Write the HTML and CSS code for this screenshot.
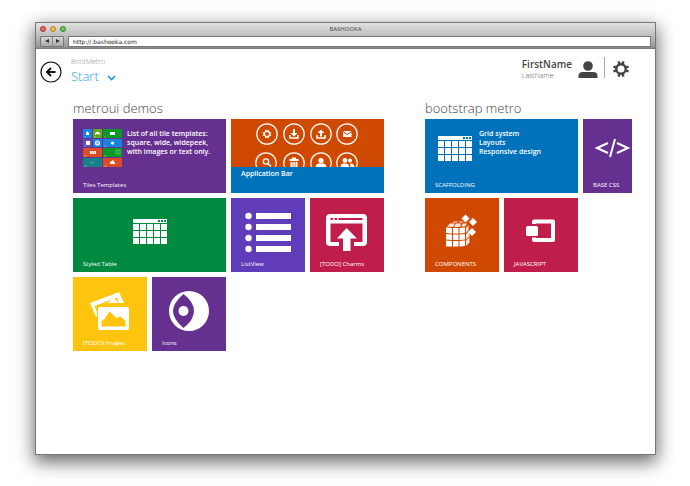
FILE: index.html
```html
<!DOCTYPE html>
<html lang="en">
<head>
<meta charset="utf-8">
<title>BASHOOKA</title>
<link rel="stylesheet" href="styles.css">
</head>
<body>
<svg class="defs" aria-hidden="true">
  <symbol id="table" viewBox="0 0 34 25">
    <path fill="currentColor" fill-rule="evenodd" d="M0 0h34v4H0zM25 1v2h2V1zM28 1v2h2V1zM31 1v2h2V1z"/>
    <path fill="currentColor" d="M0 5h6v6H0zM7 5h6v6H7zM14 5h6v6h-6zM21 5h6v6h-6zM28 5h6v6h-6zM0 12h6v6H0zM7 12h6v6H7zM14 12h6v6h-6zM21 12h6v6h-6zM28 12h6v6h-6zM0 19h6v6H0zM7 19h6v6H7zM14 19h6v6h-6zM21 19h6v6h-6zM28 19h6v6h-6z"/>
  </symbol>
  <symbol id="gear" viewBox="0 0 16 16">
    <circle cx="8" cy="8" r="4.700" fill="none" stroke="currentColor" stroke-width="2.400"/>
    <path stroke="currentColor" stroke-width="2.500" d="M9.600 3.200l.8-2.800M12.800 6.400l2.800-.8M12.800 9.600l2.800.8M9.600 12.800l.8 2.800M6.400 12.800l-.8 2.800M3.200 9.600l-2.800.8M3.200 6.400L.4 5.600M6.400 3.200L5.600.4"/>
  </symbol>
  <symbol id="user" viewBox="0 0 20 17">
    <circle cx="10" cy="5" r="4.800" fill="currentColor"/>
    <path fill="currentColor" d="M.5 17v-2c0-2.500 1.500-4 4-4h11c2.500 0 4 1.500 4 4v2z"/>
  </symbol>
</svg>
<div class="window">
  <header class="chrome">
    <div class="titlebar">
      <div class="lights"><i class="light red"></i><i class="light amber"></i><i class="light green"></i></div>
      <div class="title">BASHOOKA</div>
    </div>
    <div class="toolbar">
      <div class="nav">
        <button type="button" aria-label="Back"><svg viewBox="0 0 6 6"><path d="M1 3l4-2v4z"/></svg></button>
        <button type="button" aria-label="Forward"><svg viewBox="0 0 6 6"><path d="M5 3L1 1v4z"/></svg></button>
      </div>
      <input class="address" type="text" aria-label="Address" value="http://.bashooka.com">
    </div>
  </header>
  <main>
    <div class="top">
      <a class="back" href="#" aria-label="Go back"><svg viewBox="0 0 22 22"><circle cx="11" cy="11" r="10" fill="none" stroke="#111" stroke-width="1.200"/><path d="M15.500 11H7.500M11 7l-4 4 4 4" fill="none" stroke="#111" stroke-width="2"/></svg></a>
      <div class="brand">
        <div class="small">BootMetro</div>
        <a class="start" href="#">Start <svg viewBox="0 0 9 6"><path d="M1 1l3.500 3.500L8 1" fill="none" stroke="#1c9ad6" stroke-width="1.600"/></svg></a>
      </div>
      <div class="account">
        <div class="name"><div class="first">FirstName</div><div class="small last">LastName</div></div>
        <svg class="avatar"><use href="#user"/></svg>
        <a class="settings" href="#" aria-label="Settings"><svg><use href="#gear"/></svg></a>
      </div>
    </div>
    <div class="groups">
      <section>
        <h2>metroui demos</h2>
        <div class="tiles demos">
          <a class="tile wide purple" href="#">
            <div class="info">
              <svg class="thumb" viewBox="0 0 39 38">
                <path fill="#1684e0" d="M0 0h9v9H0zM10 10h9v8h-9zM20 10h19v8H20z"/><path fill="#64a818" d="M10 0h9v9h-9z"/><path fill="#089a22" d="M20 0h19v9H20zM20 19h19v9H20z"/><path fill="#6650b8" d="M0 10h9v8H0z"/><path fill="#db4c27" d="M0 19h19v9H0zM20 29h19v9H20z"/><path fill="#16808a" d="M0 29h19v9H0z"/>
                <path fill="#fff" d="M3 6V4l1.500-2L6 4v2zM12 5c1-3 4-3 5 0v1l-2-1h-1l-2 1zM27 3h5v3h-5zM3 12h4v4H3zM7 22h6v3H7zM27 34l1-2h1l1-1 2 3v1h-5z"/>
                <circle cx="14.500" cy="14" r="2" fill="none" stroke="#fff" stroke-width="1.200"/><path stroke="#fff" stroke-width=".8" d="M12.500 14h4"/><circle cx="29.500" cy="14" r="1.600" fill="#fff"/><path d="M33 21h4v4h-4zM34 23h2M7 34l4-1" fill="none" stroke="#8cc796" stroke-width=".6"/>
                <path stroke="#fff" stroke-width=".5" opacity=".7" d="M1 8h2M11 8h2M21 8h2M1 17h2M21 17h2M1 27h3M21 27h3M1 37h3M21 37h3"/><path d="M9 22v3M11 22v3" stroke="#db4c27" stroke-width=".6"/>
              </svg>
              <p>List of all tile templates:<br>square, wide, widepeek,<br>with images or text only.</p>
            </div>
            <span class="label">Tiles Templates</span>
          </a>
          <a class="tile wide orange peek" href="#">
            <svg class="appbar" viewBox="0 0 106 44">
              <g fill="none" stroke="#fff" stroke-width="1.200"><circle cx="12" cy="11" r="10.200"/><circle cx="39" cy="11" r="10.200"/><circle cx="66" cy="11" r="10.200"/><circle cx="92" cy="11" r="10.200"/><circle cx="11" cy="40" r="10.200"/><circle cx="39" cy="40" r="10.200"/><circle cx="66" cy="40" r="10.200"/><circle cx="92" cy="40" r="10.200"/></g>
              <g fill="#fff"><path d="M38 6h2v4h2.500L39 13.500 35.500 10H38zM65 13.500h2V10h2.500L66 6.500 62.500 10H65z"/><circle cx="66" cy="37.500" r="2.600"/><path d="M60.500 45c0-4 2-4.500 5.500-4.500s5.500.5 5.500 4.500z"/><circle cx="90" cy="37.500" r="2.400"/><circle cx="95" cy="37.500" r="2"/><path d="M85.500 45c0-4 1.500-4.500 4.500-4.500s4.500 1.500 4.500 4.500zM95.500 45c0-3 0-4-1-4.500 3-.5 5 .5 5 4.500zM88 8h8.500l-4.200 3zM88 9.300l4.300 2.800 4.200-2.800V14H88zM34.500 36h9v2h-9zM37 34.500h4V36h-4zM35.500 39h7v6h-7z"/></g>
              <path fill="none" stroke="#fff" stroke-width="1.500" d="M35 12v3h8v-3M62 12v3h8v-3"/><path d="M38 39v6M40.200 39v6" stroke="#d04900" stroke-width=".7"/><circle cx="11" cy="38.500" r="2.600" fill="none" stroke="#fff" stroke-width="1.400"/><path d="M13 40.500l3 3" stroke="#fff" stroke-width="1.600"/><use href="#gear" x="7.500" y="6.500" width="9" height="9" color="#fff"/>
            </svg>
            <span class="caption">Application Bar</span>
          </a>
          <a class="tile wide green" href="#">
            <svg class="icon table"><use href="#table"/></svg>
            <span class="label">Styled Table</span>
          </a>
          <a class="tile violet" href="#">
            <svg class="icon" viewBox="0 0 42 42"><g fill="#fff"><circle cx="1.500" cy="5" r="3.200"/><circle cx="1.500" cy="16" r="3.200"/><circle cx="1.500" cy="27" r="3.200"/><circle cx="1.500" cy="38" r="3.200"/><path d="M9 2h35v6H9zM9 13h35v6H9zM9 24h35v6H9zM9 35h35v6H9z"/></g></svg>
            <span class="label">ListView</span>
          </a>
          <a class="tile red-tile" href="#">
            <svg class="icon" viewBox="0 0 42 38"><path fill="#fff" fill-rule="evenodd" d="M4 1h33q4 0 4 4v24q0 4-4 4h-9v-4h8.500V10.500h-32V29H13v4H4q-4 0-4-4V5q0-4 4-4zM4.500 5v2H7V5zM8.500 5v2H11V5zM12.500 5v2h24V5z"/><path fill="#fff" d="M20.500 15L31 25.500h-6.500V38h-7.500V25.500H11z"/></svg>
            <span class="label">[TODO] Charms</span>
          </a>
          <a class="tile yellow" href="#">
            <svg class="icon" viewBox="0 0 42 40"><path fill="#fff" fill-rule="evenodd" d="M1 12L30 1l5 11h-5l-2-5.500L5.500 15l2.500 6v5H7z"/><path fill="#fff" d="M12 14l8-3 4-5 6 6H18z"/><path fill="#fff" fill-rule="evenodd" d="M11 16h27q2 0 2 2v19q0 2-2 2H11q-2 0-2-2V18q0-2 2-2zM12.500 35.500h24V30l-5-4.500-4 1.500-7-6.500-5 7.500-3 2z"/></svg>
            <span class="label">[TODO] Images</span>
          </a>
          <a class="tile purple" href="#">
            <svg class="icon" viewBox="0 0 42 42"><path fill="#fff" fill-rule="evenodd" d="M21 1a20 20 0 1 1 0 40a20 20 0 1 1 0-40zM15.500 4Q5 13 5 21t10.500 17Q26 30 26 21T15.500 4z"/><circle cx="15.500" cy="21" r="5" fill="#fff"/></svg>
            <span class="label">Icons</span>
          </a>
        </div>
      </section>
      <section>
        <h2>bootstrap metro</h2>
        <div class="tiles bootstrap">
          <a class="tile wide blue" href="#">
            <div class="info scaffold">
              <svg class="table"><use href="#table"/></svg>
              <p>Grid system<br>Layouts<br>Responsive design</p>
            </div>
            <span class="label">SCAFFOLDING</span>
          </a>
          <a class="tile purple" href="#">
            <svg class="code" viewBox="0 0 36 20"><path fill="none" stroke="#fff" stroke-width="2" d="M13 5L2 10l11 5M20 1l-5 18M22 5l11 5-11 5"/></svg>
            <span class="label">BASE CSS</span>
          </a>
          <a class="tile orange" href="#">
            <svg class="icon" viewBox="0 0 42 42"><g fill="#fff"><path d="M20.500 7.500l4-4 4 4-4 4zM28 11l4-4 4 4-4 4zM27 21l4-4 4 4-4 4z"/><path d="M5 23l6 .5v5.500l-6-.5zM12 23.500h5.500V29H12zM18.500 23.500l5.500-.5v5.500l-5.500.5zM5 29.500l6 .5v5.500H5zM12 30h5.500v5.500H12zM18.500 30l5.500-.5V35l-5.500.5zM5 16.500l6 .5v5.500L5 22zM12 17h5.500v5.500H12zM18.500 17l5.500-.5V22l-5.500.5z"/><path opacity=".85" d="M6 15.500l3-3h5l-2 3.500zM13 16l2-3.500h5L19 16zM20 15.500l2-3h4l-2 3zM25 17l2.500-3v5L25 22zM25 23.500l3.500-4v6l-3.500 3zM25 29.500l3.500-3v5L25 35zM11 11.500h5l1-1h-4zM18 11.500h4.500l-1-1H18z"/></g></svg>
            <span class="label">COMPONENTS</span>
          </a>
          <a class="tile red-tile" href="#">
            <svg class="icon" viewBox="0 0 42 42"><rect x="6" y="15" width="12" height="10" rx="1.500" fill="#fff"/><path d="M14 13v-2.500h19V29H14v-2.500" fill="none" stroke="#fff" stroke-width="4" stroke-linejoin="round"/></svg>
            <span class="label">JAVASCRIPT</span>
          </a>
        </div>
      </section>
    </div>
  </main>
</div>
</body>
</html>
```
FILE: styles.css
```css
* { box-sizing: border-box; }
body { margin: 0; padding: 23px 35px 32px 36px; min-height: 100vh; display: flex; background: #fff; font-family: "Open Sans", "Noto Sans", sans-serif; color: #555; }
a { color: inherit; text-decoration: none; }
svg { display: block; flex: none; }
h2, p { margin: 0; }
.defs { position: absolute; width: 0; height: 0; }
.window { flex: 1; min-width: 0; display: flex; flex-direction: column; background: #fff; box-shadow: 0 0 0 1px #777, 0 6px 17px 2px rgba(0,0,0,.6); }
.chrome { background: linear-gradient(#e2e2e2, #bdbdbd 50%, #9a9a9a 90%, #777); padding-bottom: 2px; }
.titlebar { display: grid; grid-template-columns: 1fr auto 1fr; align-items: center; height: 12px; padding: 0 4px; }
.lights { display: flex; gap: 4px; }
.light { width: 6px; height: 6px; border-radius: 50%; border: 1px solid; }
.red { background: #f06a60; border-color: #a8322c; }
.amber { background: #f7bd51; border-color: #b27a1e; }
.green { background: #6dcc55; border-color: #31852a; }
.title { font-size: 6px; line-height: 12px; color: #444; }
.toolbar { display: flex; gap: 4px; padding: 0 4px; height: 12px; align-items: center; }
.nav { display: flex; border: 1px solid #777; border-radius: 1px; }
.nav button { display: flex; align-items: center; justify-content: center; width: 11px; height: 9px; padding: 0; border: 0; background: linear-gradient(#d5d5d5, #aaa); }
.nav button + button { border-left: 1px solid #888; }
.nav svg { width: 6px; height: 6px; fill: #333; }
.address { flex: 1; min-width: 0; height: 11px; padding: 0 4px; border: 1px solid #777; background: #fff; color: #222; font: 6px/9px "DejaVu Sans", sans-serif; }
main { flex: 1; }
.top { display: flex; padding: 8px 26px 0 4px; }
.back { margin-top: 4px; }
.back svg { width: 22px; height: 22px; }
.brand { margin-left: 9px; }
.small { font-size: 7px; line-height: 10px; font-weight: 300; }
.brand .small { color: #888; }
.start { display: flex; align-items: center; gap: 8px; font-size: 13px; line-height: 18px; font-weight: 300; color: #1ba1e2; }
.start svg { width: 9px; height: 6px; margin-top: 3px; }
.account { margin-left: auto; display: flex; align-items: flex-start; color: #444; }
.first { font-size: 10px; line-height: 14px; font-weight: 600; }
.last { color: #555; }
.avatar { width: 20px; height: 17px; margin: 4px 0 0 6px; }
.settings { margin-left: 6px; padding: 4px 0 0 8px; height: 21px; border-left: 1px solid #aaa; }
.settings svg { width: 16px; height: 16px; }
.groups { display: flex; gap: 41px; margin: 14px 23px 0 37px; overflow: hidden; }
.groups section { flex: none; }
h2 { font-size: 13px; line-height: 18px; font-weight: 300; margin-bottom: 2px; color: #444; }
.tiles { display: grid; gap: 5px; grid-auto-rows: 74px; }
.demos { grid-template-columns: repeat(4, 74px); }
.bootstrap { grid-template-columns: repeat(3, 74px); }
.tile { display: flex; flex-direction: column; position: relative; overflow: hidden; color: #fff; }
.wide { grid-column: span 2; }
.bootstrap .orange { grid-column: 1; }
.purple { background: #663090; }
.orange { background: #d04900; }
.green.tile { background: #008a40; }
.violet { background: #603cba; }
.red-tile { background: #bf1e4b; }
.yellow { background: #ffc40d; }
.blue { background: #0072bc; }
.label { margin: auto 10px 4px; font-size: 6px; line-height: 8px; white-space: nowrap; }
.info { display: flex; gap: 5px; padding: 10px; }
.info p { font-size: 7px; line-height: 9px; font-weight: 600; white-space: nowrap; }
.thumb { width: 39px; height: 38px; }
.table { width: 34px; height: 25px; }
.info .table { margin: 7px 0 0 3px; }
.scaffold { gap: 7px; }
.icon { width: 42px; height: 42px; margin: 13px auto 0; overflow: visible; }
.icon.table { width: 34px; height: 25px; margin-top: 21px; }
.code { width: 36px; height: 20px; margin: 19px 0 0 12px; }
.appbar { width: 106px; height: 44px; margin: 4px auto 0; }
.caption { position: absolute; inset: auto 0 0 0; height: 26px; padding: 2px 10px; background: #0072bc; font-size: 7px; line-height: 10px; font-weight: 600; }
```
